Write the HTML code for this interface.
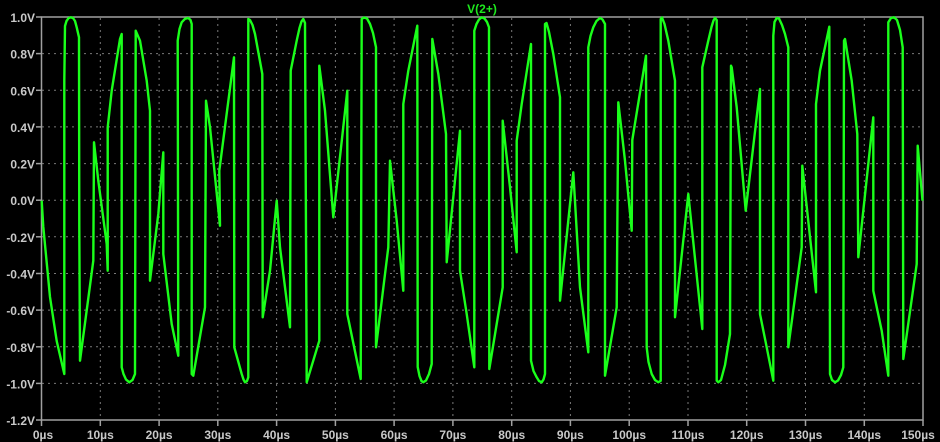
<!DOCTYPE html>
<html><head><meta charset="utf-8"><style>
html,body{margin:0;padding:0;background:#000;width:940px;height:442px;overflow:hidden}
svg text{font-family:"Liberation Sans",sans-serif;font-weight:bold;font-size:12px}
</style></head><body>
<svg width="940" height="442" viewBox="0 0 940 442" xmlns="http://www.w3.org/2000/svg">
<rect width="940" height="442" fill="#000"/>
<g stroke="#7a7a7a" stroke-width="1" stroke-dasharray="2,4">
<line x1="42" x2="923" y1="53.6" y2="53.6"/><line x1="42" x2="923" y1="90.3" y2="90.3"/>
<line x1="42" x2="923" y1="126.9" y2="126.9"/><line x1="42" x2="923" y1="163.6" y2="163.6"/>
<line x1="42" x2="923" y1="200.2" y2="200.2"/><line x1="42" x2="923" y1="236.8" y2="236.8"/>
<line x1="42" x2="923" y1="273.5" y2="273.5"/><line x1="42" x2="923" y1="310.1" y2="310.1"/>
<line x1="42" x2="923" y1="346.8" y2="346.8"/><line x1="42" x2="923" y1="383.4" y2="383.4"/>
<line y1="18" y2="420" x1="100.3" x2="100.3"/><line y1="18" y2="420" x1="159.1" x2="159.1"/>
<line y1="18" y2="420" x1="217.8" x2="217.8"/><line y1="18" y2="420" x1="276.6" x2="276.6"/>
<line y1="18" y2="420" x1="335.4" x2="335.4"/><line y1="18" y2="420" x1="394.1" x2="394.1"/>
<line y1="18" y2="420" x1="452.9" x2="452.9"/><line y1="18" y2="420" x1="511.7" x2="511.7"/>
<line y1="18" y2="420" x1="570.4" x2="570.4"/><line y1="18" y2="420" x1="629.2" x2="629.2"/>
<line y1="18" y2="420" x1="688" x2="688"/><line y1="18" y2="420" x1="746.7" x2="746.7"/>
<line y1="18" y2="420" x1="805.5" x2="805.5"/><line y1="18" y2="420" x1="864.3" x2="864.3"/>
</g>
<rect x="41.5" y="17" width="881.5" height="403" fill="none" stroke="#a0a0a0" stroke-width="1.5"/>
<g stroke="#a0a0a0" stroke-width="1.5">
<line x1="36" x2="41.5" y1="17" y2="17"/><line x1="36" x2="41.5" y1="53.6" y2="53.6"/><line x1="36" x2="41.5" y1="90.3" y2="90.3"/><line x1="36" x2="41.5" y1="126.9" y2="126.9"/><line x1="36" x2="41.5" y1="163.6" y2="163.6"/><line x1="36" x2="41.5" y1="200.2" y2="200.2"/><line x1="36" x2="41.5" y1="236.8" y2="236.8"/><line x1="36" x2="41.5" y1="273.5" y2="273.5"/><line x1="36" x2="41.5" y1="310.1" y2="310.1"/><line x1="36" x2="41.5" y1="346.8" y2="346.8"/><line x1="36" x2="41.5" y1="383.4" y2="383.4"/><line x1="36" x2="41.5" y1="420" y2="420"/>
<line y1="420" y2="426" x1="41.5" x2="41.5"/><line y1="420" y2="426" x1="100.3" x2="100.3"/><line y1="420" y2="426" x1="159.1" x2="159.1"/><line y1="420" y2="426" x1="217.8" x2="217.8"/><line y1="420" y2="426" x1="276.6" x2="276.6"/><line y1="420" y2="426" x1="335.4" x2="335.4"/><line y1="420" y2="426" x1="394.1" x2="394.1"/><line y1="420" y2="426" x1="452.9" x2="452.9"/><line y1="420" y2="426" x1="511.7" x2="511.7"/><line y1="420" y2="426" x1="570.4" x2="570.4"/><line y1="420" y2="426" x1="629.2" x2="629.2"/><line y1="420" y2="426" x1="688" x2="688"/><line y1="420" y2="426" x1="746.7" x2="746.7"/><line y1="420" y2="426" x1="805.5" x2="805.5"/><line y1="420" y2="426" x1="864.3" x2="864.3"/><line y1="420" y2="426" x1="923" x2="923"/>
</g>
<g fill="#c8c8c8" text-anchor="end">
<text x="35" y="22">1.0V</text><text x="35" y="58.6">0.8V</text><text x="35" y="95.3">0.6V</text><text x="35" y="131.9">0.4V</text><text x="35" y="168.6">0.2V</text><text x="35" y="205.2">0.0V</text><text x="35" y="241.8">-0.2V</text><text x="35" y="278.5">-0.4V</text><text x="35" y="315.1">-0.6V</text><text x="35" y="351.8">-0.8V</text><text x="35" y="388.4">-1.0V</text><text x="35" y="425">-1.2V</text>
</g>
<g fill="#c8c8c8" text-anchor="middle">
<text x="43" y="439">0µs</text><text x="100.3" y="439">10µs</text><text x="159.1" y="439">20µs</text><text x="217.8" y="439">30µs</text><text x="276.6" y="439">40µs</text><text x="335.4" y="439">50µs</text><text x="394.1" y="439">60µs</text><text x="452.9" y="439">70µs</text><text x="511.7" y="439">80µs</text><text x="570.4" y="439">90µs</text><text x="629.2" y="439">100µs</text><text x="688" y="439">110µs</text><text x="746.7" y="439">120µs</text><text x="805.5" y="439">130µs</text><text x="864.3" y="439">140µs</text><text x="918" y="439">150µs</text>
</g>
<text x="482" y="13" fill="#1ee81e" text-anchor="middle">V(2+)</text>
<polyline fill="none" stroke="#1aff1a" stroke-width="2.4" stroke-linejoin="round" points="41.7,200.7 43.3,227 50,297 56.7,341 64.3,374 64.3,80.7 65,26 66.5,21 68.5,18.2 70.7,17.3 73,18 75,21 76.7,27.3 79,37.3 79.3,227 80,360.7 93.3,260.7 94,142.3 98.3,180.7 106.7,244 107.7,270.7 107.7,127.3 111.7,90.7 120,39 121.7,34 121.7,367.3 123.5,374 126,379.5 129.3,382.3 132.5,380 135,374 135.7,30.7 140,40.7 146.7,80.7 150,110.7 150,280.7 158.3,214 163.3,152.3 163.3,254 171.7,324 178.3,355.7 177.7,40.7 179.5,29 181.7,22.3 185,18.8 188.3,18 190.5,20 191.7,24 191.7,374 193.3,375.7 205,307.3 206,100.7 210,127.3 220,225.7 219.3,170.7 234,57.3 234.3,347.3 241.7,374 243.5,379.5 245,382.3 247,381 248.3,377.3 248.3,19 250,20 252.5,25 255,34 262.3,74 262.7,317.3 270,270.7 276.7,200.7 280,247.3 290,327.3 290.7,70.7 296.7,40.7 299.5,28 301.5,21.5 303.3,19 305,23 306.7,382.3 319.3,340.7 319.3,65.7 325,110.7 333.3,217.3 347.3,90.7 347.3,314 360.7,379 361.7,19 364,17.5 367,18.5 370,24 373,33 376,47.3 376,347.3 388.3,247.3 390,160.7 396.7,220.7 403.3,290.7 403.3,104 408.3,70.7 417.3,25.7 417.7,367 419.5,376 421.5,381 423.3,382.3 426,380.5 429,374 431.7,364 432.3,39 438.3,74 446,134 446.7,262.3 460,130.7 460,270.7 466.7,314 474.3,367.3 474.3,30.7 476.5,24 479,19.5 481.7,17.3 484.5,18.5 487,22 489,27.3 489.3,369 502.7,287.3 502.7,120.7 510,187.3 516.7,252.3 516.7,140.7 521.7,104 531,44 531,360.7 533.5,371 536.7,377.3 539,381 541.7,382.3 543.5,379.5 545,374 545,24 546.5,23 549,32 553.3,54 560,97.3 560,300.7 573.3,172.3 580,287.3 588.3,352.3 588.3,47.3 590.5,36 593.3,27.3 596.5,21 600,18 602.5,19.5 605,24 605,375.7 616.7,307.3 618.3,102.3 625,160.7 631.7,230.7 632.3,140 646,55.7 646.7,347.3 648.5,362 651.7,374 655,380 658.3,382.3 660.7,380.7 660.7,19 662,17.5 664.5,24 668.3,40.7 675,80.7 675,317.3 688.3,194 702.3,329 702.3,67.3 708.3,40.7 711.5,27 713.5,20.5 715,18 716.7,20 716.7,380.7 718.3,382.3 721,380 725,365 730,334 731,65.7 731.7,67.3 736.7,107.3 745.7,210.7 760,89 760,314 766.7,347.3 773.3,380.7 773.3,35.7 774.5,22 776.7,18 779,18.5 782,25 785,34 788.3,47.3 788.3,347.3 801.7,247.3 802.3,165.7 816,292.3 816,104 820,70.7 829.3,26.7 830,374 832,380 835,382.3 838,380.5 841,375 843.3,367.3 844,40.7 845,39 851.7,80.7 857.3,134 858.3,257.3 873.3,117.3 873.3,290.7 881.7,330.7 888.3,375.7 888.3,22.3 891,18 894,17.3 897,20 900,30 902.7,47.3 903.3,359 916.7,264 917.7,145.7 922.5,200.7"/>
</svg>
</body></html>
